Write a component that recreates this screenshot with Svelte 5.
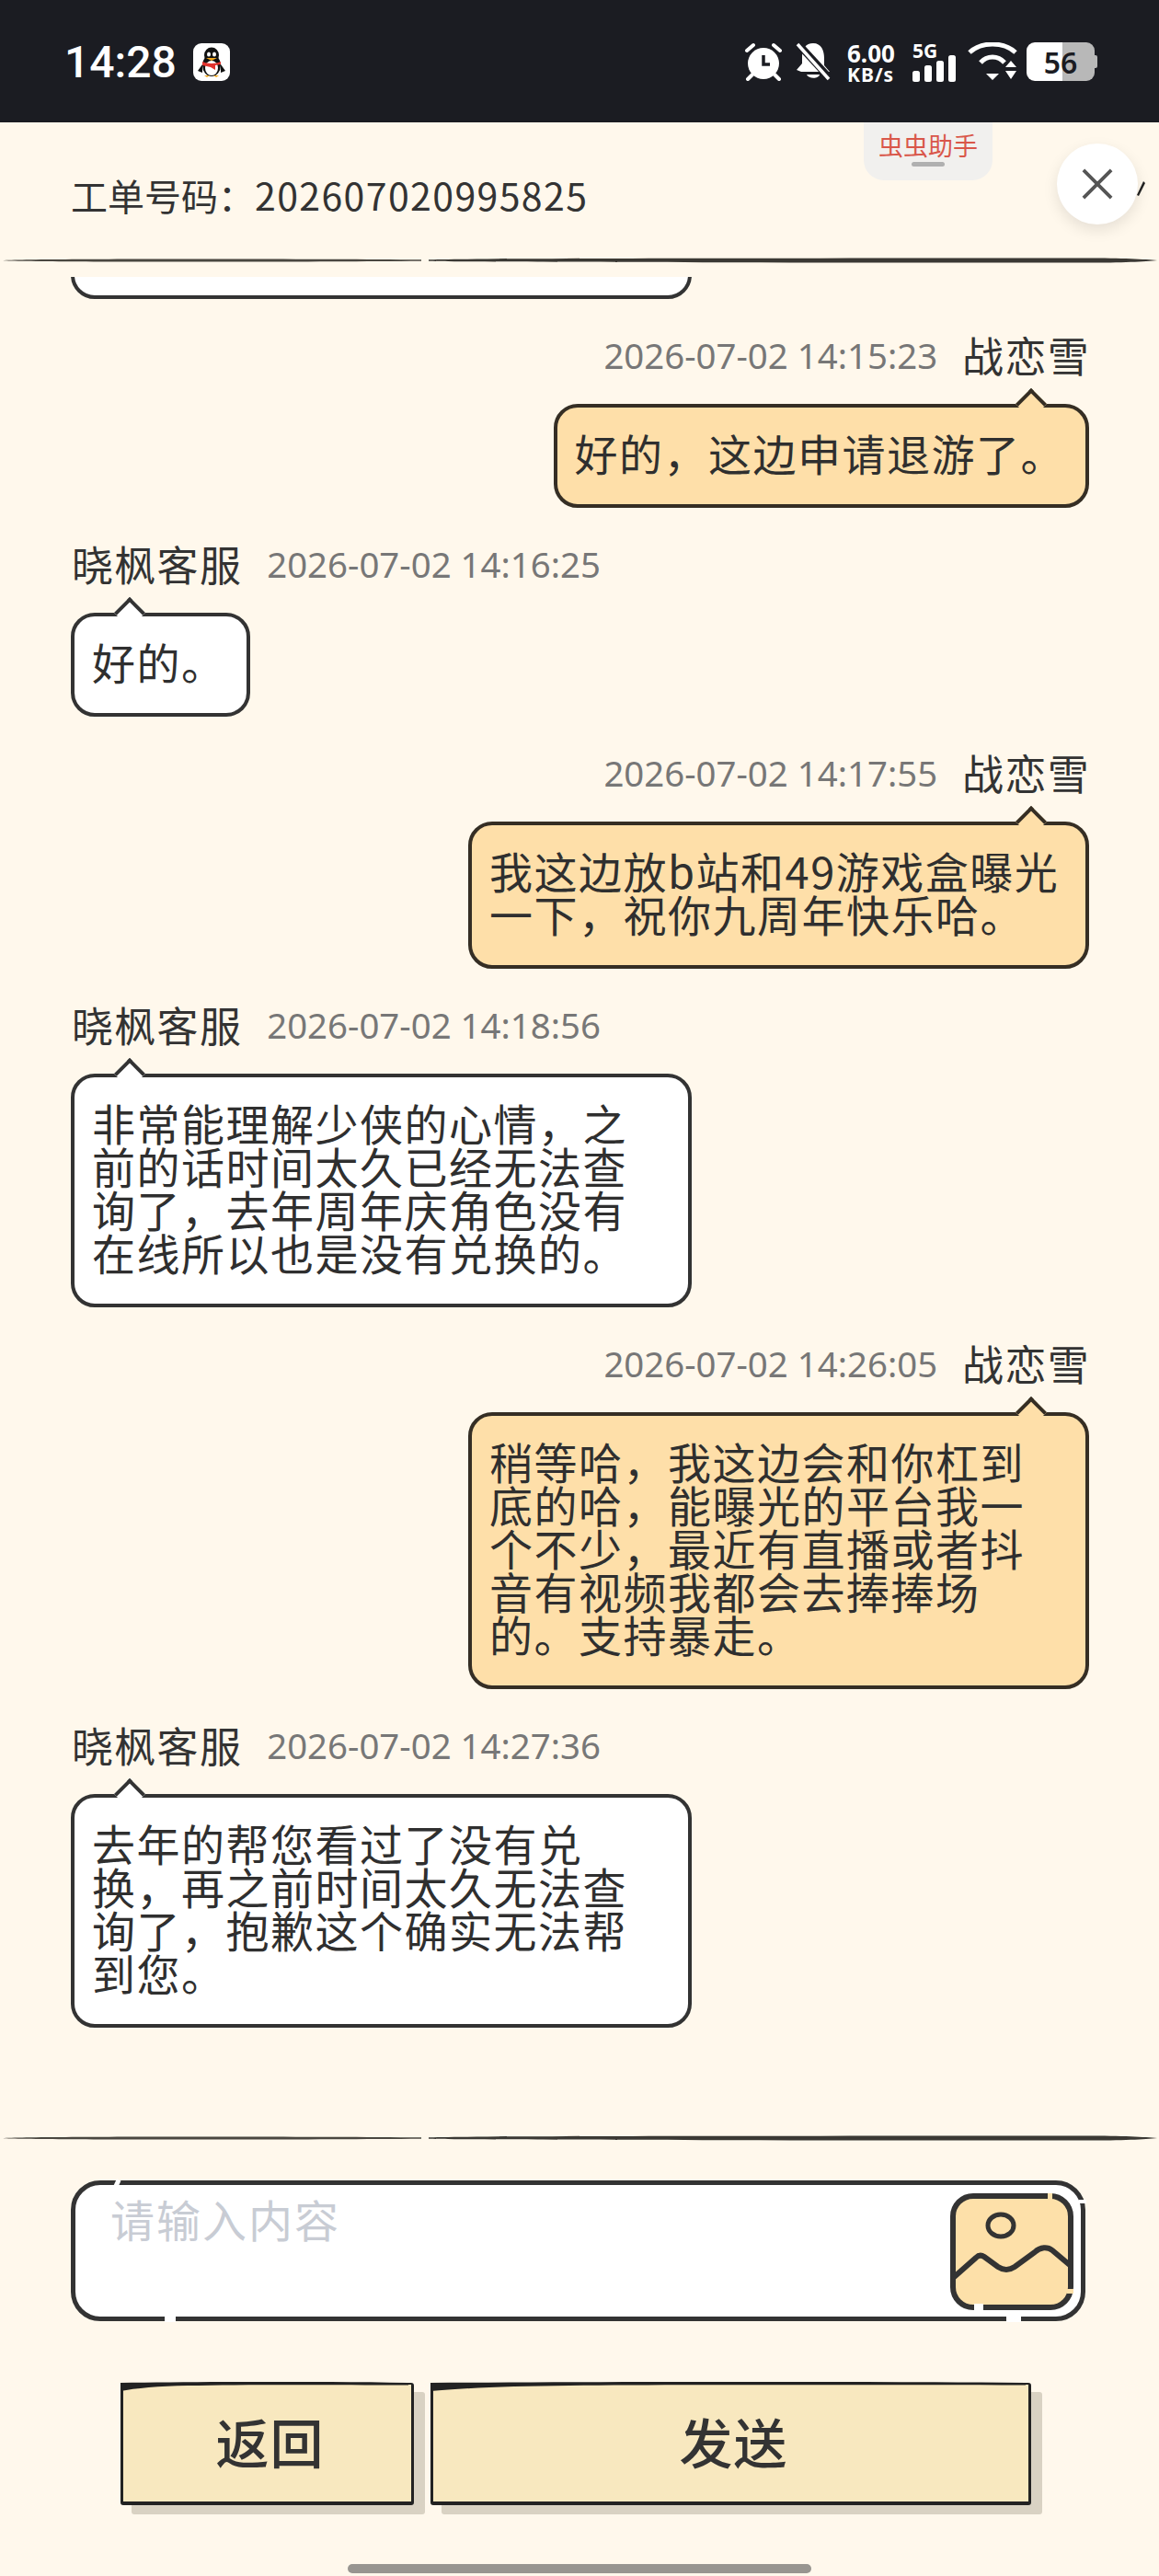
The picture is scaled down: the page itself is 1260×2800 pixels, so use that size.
<script>
  const messages = [
    { side: 'right', name: '战恋雪', time: '2026-07-02 14:15:23', text: '好的，这边申请退游了。' },
    { side: 'left', name: '晓枫客服', time: '2026-07-02 14:16:25', text: '好的。' },
    { side: 'right', long: true, name: '战恋雪', time: '2026-07-02 14:17:55', text: '我这边放b站和49游戏盒曝光一下，祝你九周年快乐哈。' },
    { side: 'left', long: true, name: '晓枫客服', time: '2026-07-02 14:18:56', text: '非常能理解少侠的心情，之前的话时间太久已经无法查询了，去年周年庆角色没有在线所以也是没有兑换的。' },
    { side: 'right', long: true, name: '战恋雪', time: '2026-07-02 14:26:05', text: '稍等哈，我这边会和你杠到底的哈，能曝光的平台我一个不少，最近有直播或者抖音有视频我都会去捧捧场的。支持暴走。' },
    { side: 'left', long: true, name: '晓枫客服', time: '2026-07-02 14:27:36', text: '去年的帮您看过了没有兑换，再之前时间太久无法查询了，抱歉这个确实无法帮到您。' }
  ];
</script>

{#snippet brush()}
  <svg class="divider" viewBox="0 0 1260 6" preserveAspectRatio="none" aria-hidden="true">
    <path d="M2 3 C20 1 300 1 458 2.2 L458 3.8 C300 5 20 5 2 3Z" fill="#4a4740" />
    <path d="M466 2.2 C500 0.8 1000 0.6 1180 0.4 C1220 0.4 1245 1.6 1258 3 C1245 4.4 1220 5.6 1180 5.6 C1000 5.4 500 5.2 466 3.8Z" fill="#3b3934" />
  </svg>
{/snippet}

{#snippet stroke()}
  <svg class="btn-stroke" viewBox="0 0 300 10" preserveAspectRatio="none" aria-hidden="true">
    <path d="M0 1 C80 0 200 -1 300 1 L300 3.5 C200 3 120 3 70 4 C40 4.5 15 7 0 10Z" fill="#222" />
  </svg>
{/snippet}

<div class="page">
  <div class="status">
    <div class="status-left">
      <span class="clock">14:28</span>
      <svg class="qq" viewBox="0 0 40 41" aria-hidden="true">
        <rect width="40" height="41" rx="9" fill="#fff" />
        <ellipse cx="20" cy="24" rx="10" ry="12" fill="#111" />
        <ellipse cx="20" cy="13" rx="8" ry="8.5" fill="#111" />
        <ellipse cx="20" cy="27" rx="7" ry="8" fill="#fff" />
        <ellipse cx="17" cy="12" rx="2" ry="2.6" fill="#fff" />
        <ellipse cx="23" cy="12" rx="2" ry="2.6" fill="#fff" />
        <path d="M14 16 L26 16 L20 19Z" fill="#f2a81d" />
        <path d="M10 20 C15 22.5 25 22.5 30 20 L30 23 L24 24 L24 29 L19 26 L10 24Z" fill="#e0322d" />
        <path d="M10 23 L5 30 L10 32Z M30 23 L35 30 L30 32Z" fill="#111" />
        <path d="M12 35 L18 35 L15 37Z M22 35 L28 35 L25 37Z" fill="#f2a81d" />
      </svg>
    </div>
    <div class="status-right">
      <svg class="ico alarm" viewBox="0 0 40 42" aria-hidden="true">
        <circle cx="20" cy="23" r="17" fill="#fff" />
        <path d="M2 9 L9 3 M38 9 L31 3 M8 35 L3 40 M32 35 L37 40" stroke="#fff" stroke-width="4" stroke-linecap="round" />
        <path d="M20 14 L20 24 L27 24" stroke="#1b1c22" stroke-width="3.5" fill="none" />
      </svg>
      <svg class="ico bell" viewBox="0 0 38 42" aria-hidden="true">
        <path d="M19 1 C28 1 31 9 31 17 L31 25 L37 32 L6 32 L1 30 L7 23 L7 15 C7 7 11 1 19 1Z" fill="#fff" />
        <path d="M12 35 L26 35 C25 40 14 40 12 35Z" fill="#fff" />
        <path d="M2 1 L37 39" stroke="#1b1c22" stroke-width="8" />
        <path d="M2 2 L36 40" stroke="#fff" stroke-width="3.5" />
      </svg>
      <div class="speed"><span class="s1">6.00</span><span class="s2">KB/s</span></div>
      <div class="signal">
        <span class="fiveg">5G</span>
        <svg class="bars" viewBox="0 0 47 29" aria-hidden="true">
          <rect x="0" y="17" width="8" height="12" rx="2.5" fill="#fff" />
          <rect x="13" y="11" width="8" height="18" rx="2.5" fill="#fff" />
          <rect x="26" y="6" width="8" height="23" rx="2.5" fill="#fff" />
          <rect x="39" y="0" width="8" height="29" rx="2.5" fill="#fff" />
        </svg>
      </div>
      <svg class="ico wifi" viewBox="0 0 54 42" aria-hidden="true">
        <path d="M2 11 C15 -1 39 -1 52 11" stroke="#fff" stroke-width="5" fill="none" />
        <path d="M14 22 C21 14 33 14 40 22" stroke="#fff" stroke-width="5" fill="none" />
        <path d="M20 34 L34 34 L27 41Z M41 27 L53 27 L47 20Z M41 31 L53 31 L47 40Z" fill="#fff" />
      </svg>
      <div class="battery"><span>56</span></div>
    </div>
  </div>

  <header class="head">
    <div class="title"><span class="cn">工单号码：</span><span>202607020995825</span></div>
    <div class="tab"><span>虫虫助手</span><i></i></div>
    <div class="close">
      <svg viewBox="0 0 36 36" aria-hidden="true"><path d="M2 2 L34 34 M34 2 L2 34" stroke="#555" stroke-width="4" /></svg>
    </div>
    <svg class="flick" viewBox="0 0 10 16" aria-hidden="true"><path d="M8 0 L10 2 L3 16 L1 15Z" fill="#222" /></svg>
  </header>
  {@render brush()}

  <main class="chat">
    <div class="item left"><div class="bubble long clipped"></div></div>
    {#each messages as m}
      <div class="item {m.side}">
        <div class="meta">
          {#if m.side === 'left'}
            <span class="name">{m.name}</span><span class="time">{m.time}</span>
          {:else}
            <span class="time">{m.time}</span><span class="name">{m.name}</span>
          {/if}
        </div>
        <div class="bubble" class:long={m.long}>
          <i class="tail"></i>
          <p>{m.text}</p>
        </div>
      </div>
    {/each}
  </main>
  {@render brush()}

  <section class="composer">
    <div class="input">
      <span class="placeholder">请输入内容</span>
      <svg class="pic" viewBox="0 0 134 127" aria-hidden="true">
        <rect x="3" y="3" width="128" height="121" rx="22" fill="#fde0a9" stroke="#333" stroke-width="6" />
        <ellipse cx="55" cy="35" rx="14" ry="12" fill="none" stroke="#333" stroke-width="5" />
        <path d="M2 93 L28 70 C31 67 34 67 37 69 L52 80 C58 84 64 84 70 80 L92 64 C98 58 106 58 111 62 L130 78" fill="none" stroke="#333" stroke-width="6" />
        <rect x="106" y="0" width="5" height="7" fill="#fde0a9" />
        <rect x="127" y="104" width="7" height="5" fill="#fde0a9" />
        <rect x="26" y="120" width="10" height="7" fill="#fff" />
      </svg>
      <i class="nick n1"></i><i class="nick n2"></i><i class="nick n3"></i><i class="nick n4"></i>
    </div>
    <div class="actions">
      <button class="btn back">{@render stroke()}<span>返回</span></button>
      <button class="btn send">{@render stroke()}<span>发送</span></button>
    </div>
    <div class="home"></div>
  </section>
</div>

<style>
  :global(body) {
    margin: 0;
    background: #fff8ec;
  }
  .page {
    height: 2800px;
    display: flex;
    flex-direction: column;
    overflow: hidden;
    background: #fff8ec;
    color: #333;
    font-family: "Noto Sans CJK SC", "Noto Sans", sans-serif;
  }
  .status {
    height: 133px;
    flex: none;
    background: #1b1c22;
    display: flex;
    justify-content: space-between;
    padding: 46px 70px 0 70px;
    box-sizing: border-box;
    color: #fff;
    font-family: Roboto, "Noto Sans", sans-serif;
  }
  .status-left {
    display: flex;
    gap: 20px;
    height: 42px;
    align-items: center;
  }
  .clock {
    font-size: 48px;
    font-weight: 500;
    line-height: 44px;
    width: 120px;
    margin-top: 2px;
  }
  .qq {
    width: 40px;
    height: 41px;
  }
  .status-right {
    display: flex;
    align-items: flex-start;
    height: 42px;
  }
  .ico {
    display: block;
    flex: none;
  }
  .alarm {
    width: 42px;
    height: 42px;
  }
  .bell {
    width: 38px;
    height: 42px;
    margin-left: 14px;
  }
  .speed {
    margin-left: 18px;
    width: 56px;
    display: flex;
    flex-direction: column;
    font-weight: 700;
    font-family: "Noto Sans", sans-serif;
  }
  .s1 {
    font-size: 26px;
    line-height: 24px;
  }
  .s2 {
    font-size: 21px;
    line-height: 18px;
    margin-top: 2px;
    letter-spacing: 1px;
  }
  .signal {
    margin-left: 15px;
    width: 47px;
    height: 42px;
  }
  .fiveg {
    display: block;
    font-family: "Noto Sans", sans-serif;
    font-size: 21px;
    font-weight: 700;
    line-height: 18px;
  }
  .bars {
    display: block;
    width: 47px;
    height: 29px;
    margin-top: -4px;
  }
  .wifi {
    width: 54px;
    height: 42px;
    margin-left: 13px;
  }
  .battery {
    margin-left: 10px;
    width: 74px;
    height: 42px;
    border-radius: 9px;
    background: linear-gradient(90deg, #fff 53%, #b8b8b8 53%);
    display: flex;
    align-items: center;
    justify-content: center;
    color: #1b1c22;
    font-family: "Noto Sans", sans-serif;
    font-size: 32px;
    font-weight: 600;
    position: relative;
  }
  .battery::after {
    content: "";
    position: absolute;
    right: -3px;
    top: 14px;
    width: 3px;
    height: 14px;
    background: #b8b8b8;
    border-radius: 0 2px 2px 0;
  }
  .head {
    flex: none;
    height: 147px;
    position: relative;
    display: flex;
    align-items: center;
    padding-left: 77px;
    box-sizing: border-box;
  }
  .title {
    font-size: 41px;
    line-height: 50px;
    letter-spacing: 1.4px;
    margin-top: 10px;
    white-space: nowrap;
  }
  .title .cn {
    font-size: 40px;
    letter-spacing: 0;
  }
  .tab {
    position: absolute;
    left: 939px;
    top: 0;
    width: 140px;
    height: 63px;
    background: #f1f0ee;
    border-radius: 0 0 22px 22px;
    display: flex;
    flex-direction: column;
    align-items: center;
    color: #d9574a;
    font-size: 27px;
    line-height: 32px;
    padding-top: 9px;
    box-sizing: border-box;
  }
  .tab i {
    width: 36px;
    height: 5px;
    border-radius: 3px;
    background: #b0b0b0;
    margin-top: 2px;
  }
  .close {
    position: absolute;
    left: 1149px;
    top: 23px;
    width: 88px;
    height: 88px;
    border-radius: 50%;
    background: #fff;
    box-shadow: 0 6px 16px rgba(0, 0, 0, 0.1);
    display: flex;
    align-items: center;
    justify-content: center;
    z-index: 2;
  }
  .close svg {
    width: 34px;
    height: 34px;
  }
  .flick {
    position: absolute;
    left: 1235px;
    top: 64px;
    width: 10px;
    height: 16px;
  }
  .divider {
    display: block;
    flex: none;
    width: 1260px;
    height: 6px;
  }
  .chat {
    flex: 1;
    min-height: 0;
    margin-top: 15px;
    padding: 0 76px 117px 77px;
    display: flex;
    flex-direction: column;
    justify-content: flex-end;
    gap: 36px;
    overflow: hidden;
  }
  .item {
    flex: none;
    display: flex;
    flex-direction: column;
  }
  .item.left {
    align-items: flex-start;
  }
  .item.right {
    align-items: flex-end;
  }
  .meta {
    display: flex;
    align-items: center;
    gap: 27px;
    height: 50px;
    margin-bottom: 28px;
    padding-left: 1px;
  }
  .name {
    font-size: 45px;
    letter-spacing: 1.3px;
    line-height: 50px;
  }
  .item.right .name {
    margin-right: -1px;
  }
  .time {
    font-size: 38.4px;
    color: #777;
    line-height: 50px;
    font-family: "Noto Sans", sans-serif;
  }
  .bubble {
    position: relative;
    box-sizing: border-box;
    padding: 25px 22px 33px 19px;
    border: 4px solid #333;
    border-radius: 26px;
    background: #fff;
  }
  .item.right .bubble {
    background: #fedfa9;
    border-color: #352e24;
  }
  .bubble.long {
    width: 675px;
  }
  .clipped {
    height: 120px;
  }
  .bubble p {
    margin: 0;
    max-width: 622px;
    font-size: 47px;
    line-height: 47px;
    letter-spacing: 1.5px;
    color: #2f2f2f;
  }
  .tail {
    position: absolute;
    top: -16px;
    width: 24px;
    height: 24px;
    box-sizing: border-box;
    background: inherit;
    border-top: 4px solid #333;
    border-left: 4px solid #333;
    transform: rotate(45deg);
  }
  .item.left .tail {
    left: 48px;
  }
  .item.right .tail {
    right: 47px;
    border-color: #352e24;
  }
  .composer {
    flex: none;
    padding: 43px 0 3px;
    display: flex;
    flex-direction: column;
  }
  .input {
    position: relative;
    margin-left: 77px;
    width: 1103px;
    height: 153px;
    box-sizing: border-box;
    border: 5px solid #333;
    border-radius: 32px;
    background: #fff;
    display: flex;
    justify-content: space-between;
    padding: 6px 8px 8px 38px;
  }
  .placeholder {
    font-size: 48px;
    line-height: 60px;
    letter-spacing: 2px;
    color: #c8ccd4;
  }
  .pic {
    width: 134px;
    height: 127px;
    flex: none;
    margin: 3px 0 0;
  }
  .nick {
    position: absolute;
    background: #fff;
  }
  .n1 {
    left: 43px;
    top: -6px;
    width: 5px;
    height: 8px;
    transform: rotate(25deg);
  }
  .n2 {
    left: 97px;
    bottom: -6px;
    width: 12px;
    height: 8px;
  }
  .n3 {
    left: 1012px;
    bottom: -6px;
    width: 16px;
    height: 8px;
  }
  .n4 {
    right: -6px;
    top: 16px;
    width: 8px;
    height: 4px;
  }
  .actions {
    display: flex;
    gap: 18px;
    margin: 67px 0 0 131px;
  }
  .btn {
    position: relative;
    height: 133px;
    box-sizing: border-box;
    border: solid #222;
    border-width: 2px 3px 4px 3px;
    border-radius: 3px;
    padding: 0 0 6px 6px;
    background: #f8e8bf;
    box-shadow: 12px 10px 0 #d9d2c3;
    color: #333;
    font: 500 58px/1 "Noto Sans CJK SC", sans-serif;
    letter-spacing: 1px;
  }
  .btn-stroke {
    position: absolute;
    left: -3px;
    top: -3px;
    width: 100%;
    height: 10px;
  }
  .back {
    width: 319px;
  }
  .send {
    width: 653px;
  }
  .home {
    width: 504px;
    height: 10px;
    margin: 64px auto 0;
    border-radius: 5px;
    background: #989590;
  }
</style>
